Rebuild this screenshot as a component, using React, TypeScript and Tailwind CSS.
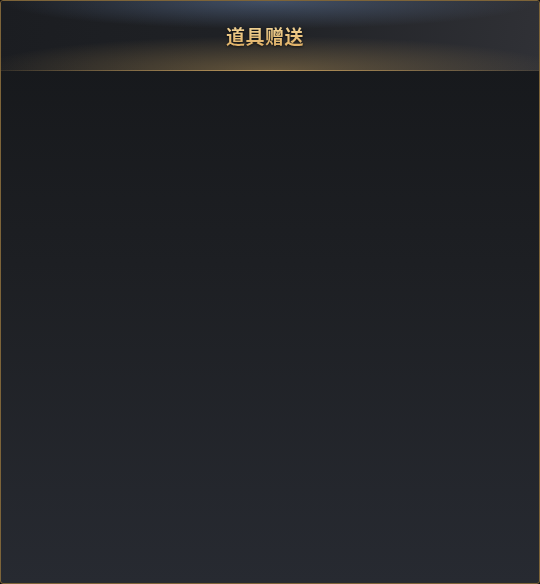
import React from "react"

const App: React.FC = () => {
    return (
        <div className="w-[540px] h-[584px] bg-[#0d0e10]">
            <div className="flex flex-col w-full h-full border border-[#7d6439] rounded-[3px] overflow-hidden bg-[linear-gradient(180deg,#15171a_0%,#1d1f23_45%,#272a31_100%)]">
                {/* 상단 타이틀 */}
                <div className="relative flex items-center justify-center h-[70px] shrink-0 pr-[10px] bg-[radial-gradient(ellipse_50%_40%_at_50%_0%,rgba(100,125,165,0.5),transparent_100%),radial-gradient(ellipse_55%_50%_at_50%_100%,rgba(180,145,85,0.45),transparent_100%),linear-gradient(100deg,#1b1d21_0%,#202226_50%,#303136_100%)]">
                    <h1 className="text-[19px] font-bold tracking-[0.5px] bg-[linear-gradient(180deg,#f7dca0_0%,#dcaa5e_100%)] bg-clip-text text-transparent drop-shadow-[0_1px_1px_rgba(0,0,0,0.6)] [font-family:'Noto_Sans_CJK_SC',sans-serif]">
                        道具赠送
                    </h1>
                    <div className="absolute left-0 right-0 bottom-0 h-px bg-[linear-gradient(90deg,rgba(150,120,70,0.15)_0%,#b9955a_50%,rgba(150,120,70,0.15)_100%)]" />
                </div>
                <div className="flex-1" />
            </div>
        </div>
    )
}

export default App
